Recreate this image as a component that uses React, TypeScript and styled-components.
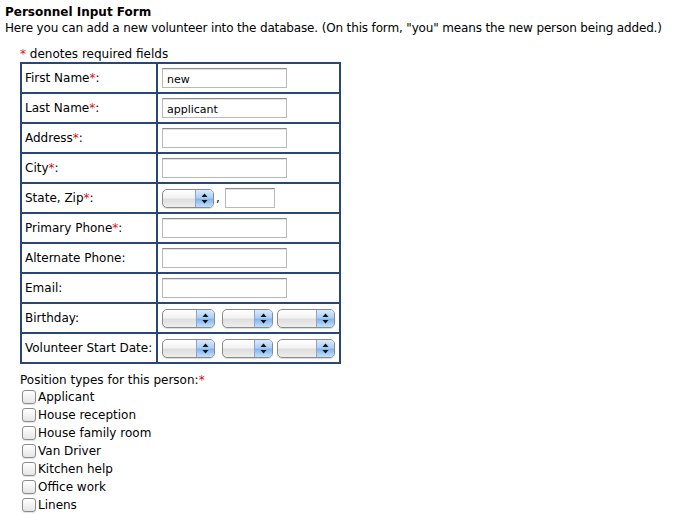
import React from "react";
import styled, { createGlobalStyle } from "styled-components";

const Global = createGlobalStyle`
  html, body { margin: 0; padding: 0; background: #fff; }
  body {
    padding: 5px;
    font-family: "DejaVu Sans", Verdana, sans-serif;
    font-size: 12px;
    color: #000;
  }
`;

const Title = styled.div`
  font-weight: bold;
  font-size: 12px;
  line-height: 15px;
`;

const Intro = styled.div`
  line-height: 16px;
  white-space: nowrap;
  letter-spacing: -0.15px;
`;

const FormBlock = styled.div`
  margin: 10px 0 0 15px;
`;

const Note = styled.div`
  line-height: 16px;
  height: 16px;
`;

const Star = styled.span`
  color: #e01010;
`;

const Table = styled.table`
  border-collapse: collapse;
  border: 2px solid #2a4677;
  width: 321px;
  table-layout: fixed;
`;

const Row = styled.tr`
  height: 30px;
`;

const LabelCell = styled.td`
  border: 2px solid #2a4677;
  padding: 0 0 0 3px;
  white-space: nowrap;
  vertical-align: middle;
`;

const FieldCell = styled.td`
  border: 2px solid #2a4677;
  padding: 0 0 0 4px;
  vertical-align: middle;
`;

const FieldLine = styled.div`
  display: flex;
  align-items: center;
`;

const TextInput = styled.input<{ $w?: number }>`
  box-sizing: border-box;
  width: ${(p) => p.$w ?? 125}px;
  height: 20px;
  border: 1px solid #b9b9b9;
  border-top-color: #8c8c8c;
  box-shadow: inset 0 1px 0 #e2e2e2;
  padding: 2px 4px 0;
  font-family: "DejaVu Sans", Verdana, sans-serif;
  font-size: 11px;
  color: #000;
  outline: none;
  background: #fff;
`;

const SelectBox = styled.div<{ $w: number; $ml: number }>`
  box-sizing: border-box;
  width: ${(p) => p.$w}px;
  margin-left: ${(p) => p.$ml}px;
  height: 19px;
  border: 1px solid #8a8a8a;
  border-radius: 5px;
  display: flex;
  overflow: hidden;
  background: linear-gradient(#ffffff 0%, #f3f3f3 45%, #dedede 55%, #eeeeee 100%);
  box-shadow: 0 1px 1px rgba(0, 0, 0, 0.15);
`;

const SelectFill = styled.div`
  flex: 1;
`;

const SelectArrow = styled.div`
  width: 17px;
  border-left: 1px solid #8ea4cc;
  background: linear-gradient(#d9eafc 0%, #aed0f6 45%, #84b6ee 55%, #c2e1fb 100%);
  display: flex;
  align-items: center;
  justify-content: center;
`;

const Comma = styled.span`
  margin: 0 5px 0 2px;
`;

const Positions = styled.div`
  margin-top: 9px;
`;

const PosTitle = styled.div`
  line-height: 15px;
  margin-bottom: 0;
`;

const CheckRow = styled.label`
  display: flex;
  align-items: center;
  height: 18px;
  padding-left: 2px;
  gap: 2px;
`;

const Check = styled.input`
  appearance: none;
  -webkit-appearance: none;
  margin: 0;
  width: 14px;
  height: 14px;
  border: 1px solid #8c8c8c;
  border-radius: 3px;
  background: linear-gradient(#ffffff, #e6e6e6);
  box-shadow: 0 1px 1px rgba(0, 0, 0, 0.12);
`;

const Arrows = () => (
  <svg width="7" height="11" viewBox="0 0 7 11">
    <path d="M3.5 0.5 L6.5 4 L0.5 4 Z" fill="#111" />
    <path d="M3.5 10.5 L6.5 7 L0.5 7 Z" fill="#111" />
  </svg>
);

const FakeSelect = ({ w, ml = 0 }: { w: number; ml?: number }) => (
  <SelectBox $w={w} $ml={ml}>
    <SelectFill />
    <SelectArrow>
      <Arrows />
    </SelectArrow>
  </SelectBox>
);

const Req = () => <Star>*</Star>;

const textRows: { label: string; req: boolean; value?: string }[] = [
  { label: "First Name", req: true, value: "new" },
  { label: "Last Name", req: true, value: "applicant" },
  { label: "Address", req: true },
  { label: "City", req: true },
];

const textRows2: { label: string; req: boolean }[] = [
  { label: "Primary Phone", req: true },
  { label: "Alternate Phone", req: false },
  { label: "Email", req: false },
];

const positions = [
  "Applicant",
  "House reception",
  "House family room",
  "Van Driver",
  "Kitchen help",
  "Office work",
  "Linens",
];

const DateSelects = () => (
  <FieldLine>
    <FakeSelect w={53} />
    <FakeSelect w={51} ml={7} />
    <FakeSelect w={58} ml={4} />
  </FieldLine>
);

export default function App() {
  return (
    <>
      <Global />
      <Title>Personnel Input Form</Title>
      <Intro>
        Here you can add a new volunteer into the database. (On this form, "you" means the new
        person being added.)
      </Intro>
      <FormBlock>
        <Note>
          <Req /> denotes required fields
        </Note>
        <Table>
          <colgroup>
            <col style={{ width: 136 }} />
            <col />
          </colgroup>
          <tbody>
            {textRows.map((r) => (
              <Row key={r.label}>
                <LabelCell>
                  {r.label}
                  {r.req && <Req />}:
                </LabelCell>
                <FieldCell>
                  <TextInput defaultValue={r.value ?? ""} />
                </FieldCell>
              </Row>
            ))}
            <Row>
              <LabelCell>
                State, Zip<Req />:
              </LabelCell>
              <FieldCell>
                <FieldLine>
                  <FakeSelect w={52} />
                  <Comma>,</Comma>
                  <TextInput $w={50} />
                </FieldLine>
              </FieldCell>
            </Row>
            {textRows2.map((r) => (
              <Row key={r.label}>
                <LabelCell>
                  {r.label}
                  {r.req && <Req />}:
                </LabelCell>
                <FieldCell>
                  <TextInput />
                </FieldCell>
              </Row>
            ))}
            <Row>
              <LabelCell>Birthday:</LabelCell>
              <FieldCell>
                <DateSelects />
              </FieldCell>
            </Row>
            <Row>
              <LabelCell>Volunteer Start Date:</LabelCell>
              <FieldCell>
                <DateSelects />
              </FieldCell>
            </Row>
          </tbody>
        </Table>
        <Positions>
          <PosTitle>
            Position types for this person:<Req />
          </PosTitle>
          {positions.map((p) => (
            <CheckRow key={p}>
              <Check type="checkbox" />
              {p}
            </CheckRow>
          ))}
        </Positions>
      </FormBlock>
    </>
  );
}
